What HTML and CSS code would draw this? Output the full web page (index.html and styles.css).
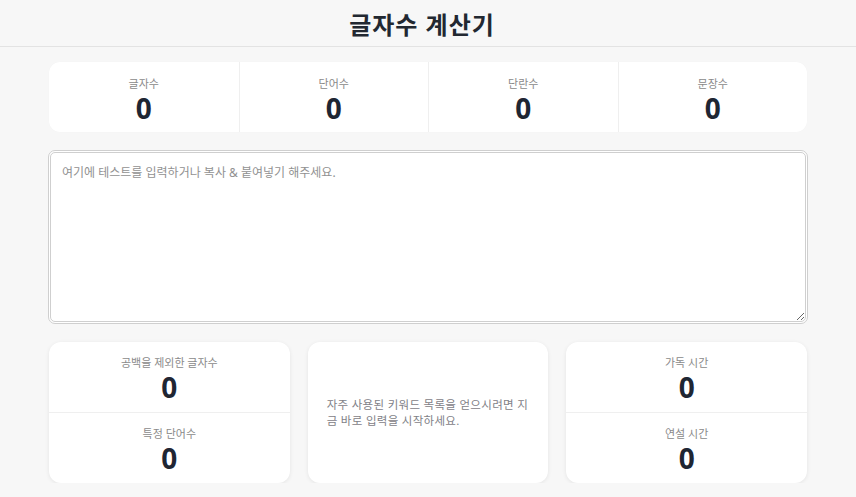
FILE: index.html
```html
<!DOCTYPE html>
<html lang="ko">
<head>
<meta charset="utf-8">
<title>글자수 계산기</title>
<link rel="stylesheet" href="styles.css">
</head>
<body>
<header class="header">
  <h1 class="title">글자수 계산기</h1>
</header>
<main class="container">
  <section class="stats">
    <div class="stat"><div class="label">글자수</div><div class="value">0</div></div>
    <div class="stat"><div class="label">단어수</div><div class="value">0</div></div>
    <div class="stat"><div class="label">단란수</div><div class="value">0</div></div>
    <div class="stat"><div class="label">문장수</div><div class="value">0</div></div>
  </section>
  <textarea class="input" placeholder="여기에 테스트를 입력하거나 복사 &amp; 붙여넣기 해주세요."></textarea>
  <section class="cards">
    <div class="card split">
      <div class="half"><div class="label">공백을 제외한 글자수</div><div class="value">0</div></div>
      <div class="half"><div class="label">특정 단어수</div><div class="value">0</div></div>
    </div>
    <div class="card message">
      <p class="note">자주 사용된 키워드 목록을 얻으시려면 지금 바로 입력을 시작하세요.</p>
    </div>
    <div class="card split">
      <div class="half"><div class="label">가독 시간</div><div class="value">0</div></div>
      <div class="half"><div class="label">연설 시간</div><div class="value">0</div></div>
    </div>
  </section>
</main>
</body>
</html>
```
FILE: styles.css
```css
* { box-sizing: border-box; }
html, body { margin: 0; padding: 0; }
body {
  background: #f7f7f7;
  font-family: "Noto Sans", "Noto Sans CJK KR", sans-serif;
  color: #1f2633;
}
.header {
  height: 47px;
  border-bottom: 1px solid #e3e3e3;
  display: flex;
  align-items: center;
  justify-content: center;
  padding-right: 12px;
}
.title {
  margin: 0;
  font-size: 24px;
  font-weight: 700;
  color: #222831;
  letter-spacing: 1px;
}
.container {
  width: 758px;
  margin: 15px auto 0;
  display: flex;
  flex-direction: column;
}
.stats {
  display: grid;
  grid-template-columns: repeat(4, 1fr);
  background: #fff;
  border-radius: 11px;
  height: 70px;
  box-shadow: 0 0 1px rgba(0,0,0,0.04);
}
.stat {
  display: flex;
  flex-direction: column;
  align-items: center;
  justify-content: center;
  border-left: 1px solid #efefef;
  padding-top: 5px;
}
.stat:first-child { border-left: none; }
.label {
  font-size: 11px;
  color: #8a8a8a;
  line-height: 14px;
}
.value {
  margin-top: 3px;
  font-size: 28px;
  font-weight: 700;
  line-height: 28px;
  color: #1f2633;
}
.input {
  display: block;
  margin: 18px -1px 0;
  height: 174px;
  border: 3px double #cfcfcf;
  border-radius: 7px;
  background: #fff;
  padding: 12px 11px;
  font-family: "Noto Sans", "Noto Sans CJK KR", sans-serif;
  font-size: 12px;
  line-height: 16px;
  color: #333;
  resize: vertical;
  outline: none;
}
.input::placeholder { color: #919191; }
.cards {
  margin-top: 18px;
  display: grid;
  grid-template-columns: repeat(3, 1fr);
  gap: 18px;
}
.card {
  background: #fff;
  border-radius: 12px;
  height: 141px;
  box-shadow: 0 1px 4px rgba(0,0,0,0.08);
}
.split {
  display: flex;
  flex-direction: column;
}
.half {
  flex: 1;
  display: flex;
  flex-direction: column;
  align-items: center;
  justify-content: center;
  padding-top: 2px;
}
.half + .half { border-top: 1px solid #efefef; }
.message {
  display: flex;
  align-items: center;
  padding: 0 17px 0 19px;
}
.note {
  margin: 0;
  font-size: 11.5px;
  line-height: 16px;
  color: #7f8187;
  letter-spacing: 0.3px;
}
```
